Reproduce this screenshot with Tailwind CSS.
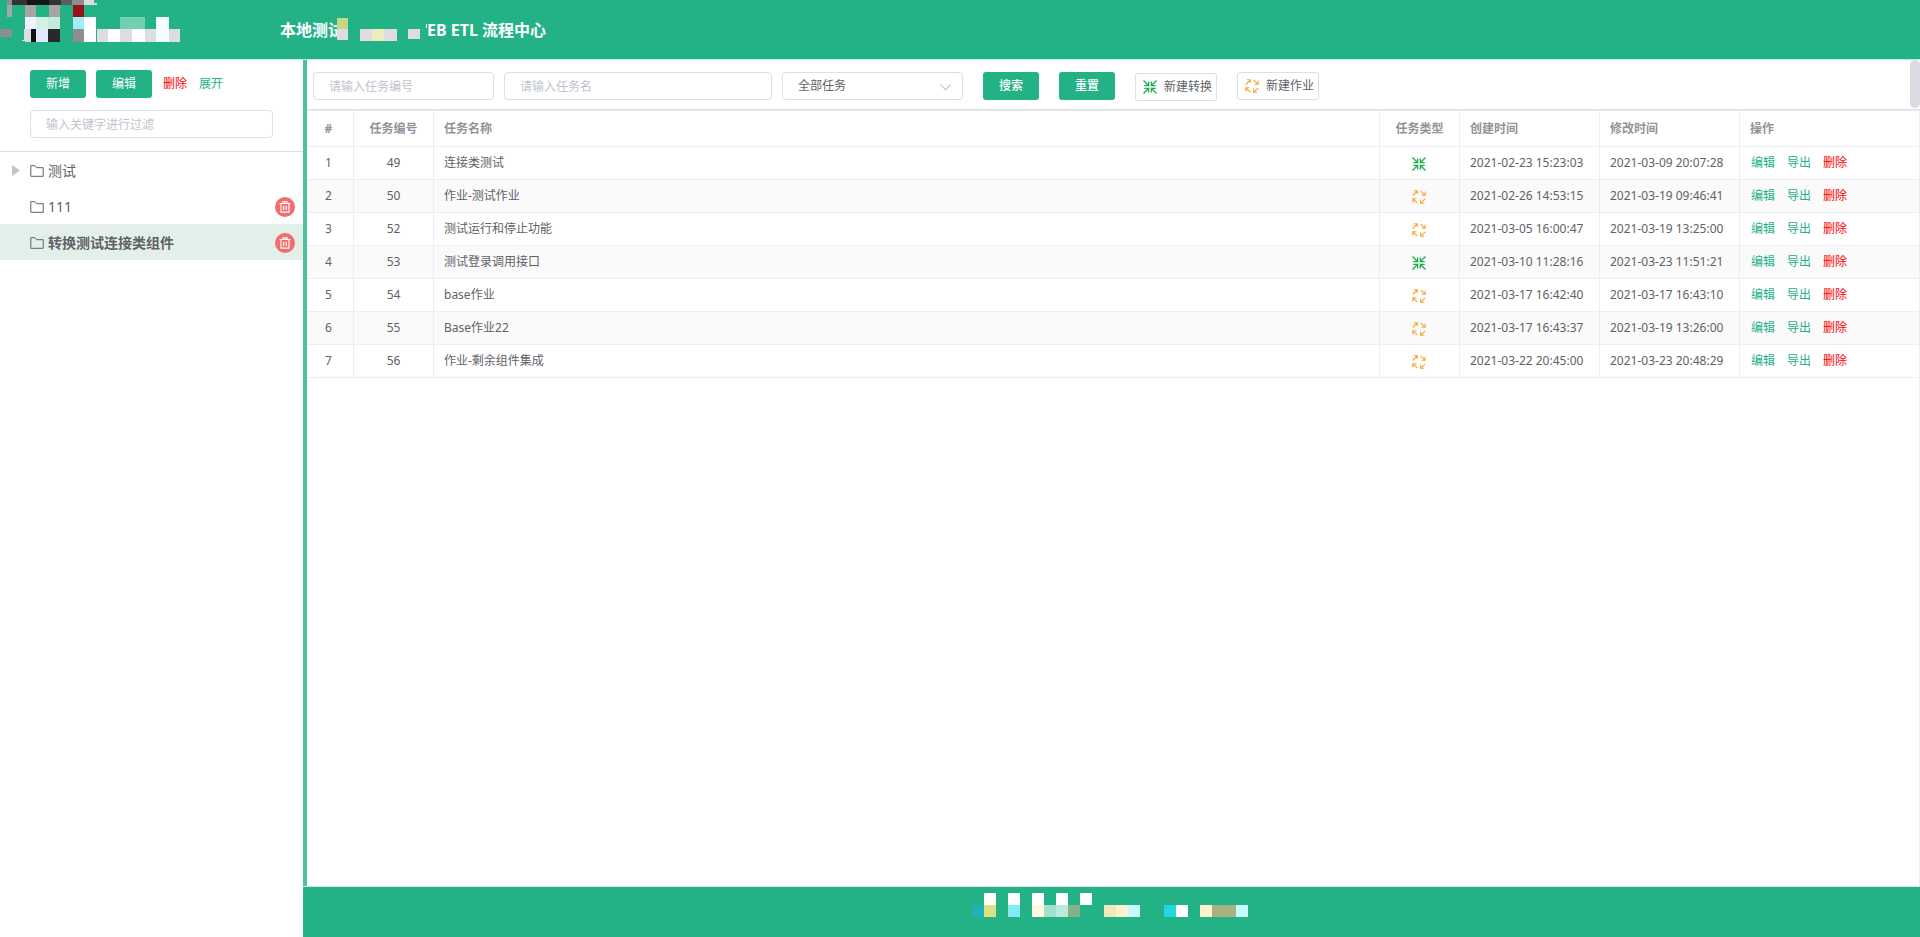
<!DOCTYPE html>
<html lang="zh-CN">
<head>
<meta charset="utf-8">
<meta name="viewport" content="width=device-width, initial-scale=1">
<title>流程中心</title>
<script src="https://cdn.jsdelivr.net/npm/@tailwindcss/browser@4"></script>
</head>
<body class="flex h-screen flex-col overflow-hidden bg-white font-['Noto_Sans','Noto_Sans_CJK_SC',sans-serif] text-xs text-[#606266]">

<svg class="hidden" aria-hidden="true">
  <symbol id="shrink" viewBox="0 0 14 14">
    <path d="M.5.5 5 5M13.500.5 9 5M.5 13.500 5 9M13.500 13.500 9 9" fill="none" stroke="#1fae4e" stroke-width="1.400"/>
    <path d="M6.300 1.500v4.800H1.300V5h2.500L5 3.800V1.500zM7.700 1.500v4.800h5V5h-2.500L9 3.800V1.500zM6.300 12.500V7.700H1.300V9h2.500L5 10.200v2.300zM7.700 12.500V7.700h5V9h-2.500L9 10.200v2.300z" fill="#1fae4e"/>
  </symbol>
  <symbol id="expand" viewBox="0 0 14 14">
    <path d="M.8 5.500 5 1M1.800.8H5.300V4M8.500.8 13 5M13.200 1.500V5.200H9.500M13.200 8.800 9 13M8.600 9.500V13.200H12.200M5.500 13.200 1 9M.8 12.500V8.800H4.500" fill="none" stroke="#f5a93c" stroke-width="1.100"/>
  </symbol>
  <symbol id="folder" viewBox="0 0 14 12">
    <path d="M.8 11.300V.7H5l1.700 2h6.500v8.600z" fill="none" stroke="#606266" stroke-width="1"/>
  </symbol>
  <symbol id="trash" viewBox="0 0 12 12">
    <path d="M.5 2.500h11M4 2.300V.8h4v1.500M2 2.500v8.700h8V2.500M4.700 4.800v4.200M7.300 4.800v4.200" fill="none" stroke="#fff" stroke-width="1.200"/>
  </symbol>
</svg>

<header class="flex h-[60px] shrink-0 items-start border-b border-[#c4e9dd] bg-[#22b286] text-white">
  <svg class="h-[50px] w-[280px] shrink-0" viewBox="0 0 280 50" shape-rendering="crispEdges" aria-hidden="true">
    <path fill="#8e8e90" d="M7 0h8v5H7zM72 0h12v5H72zM0 29h12v8H0zM73 29h12v13H73z"/>
    <path fill="#333" d="M12 0h15v5H12zM49 0h12v5H49z"/><path fill="#161616" d="M27 0h22v5H27z"/><path fill="#5c5e5e" d="M61 0h11v5H61z"/>
    <path fill="#dcdce2" d="M84 0h10v3h3v2H84zM24 29h7v13h-6v-1h-3v-1h2zM97 29h11v13H97zM120 29h12v13h-12zM145 29h11v13h-11zM169 29h11v13h-11z"/>
    <path fill="#a5a5a5" d="M7 5h5v12H7zM25 5h11v12H25zM49 5h11v12H49z"/>
    <path fill="#9b1118" d="M73 5h11v12H73z"/>
    <path fill="#edf2ff" d="M25 17h11v12H25z"/><path fill="#d5f0e5" d="M36 17h12v12H36z"/><path fill="#c2eadd" d="M48 17h12v12H48z"/>
    <path fill="#9eeefc" d="M73 17h11v12H73z"/><path fill="#fff" d="M84 17h12v25H84zM108 29h12v13h-12zM132 29h13v13h-13z"/>
    <path fill="#70d0b2" d="M120 17h25v12h-25z"/><path fill="#f0fffe" d="M156 17h13v25h-13z"/>
    <path fill="#111" d="M31 29h5v13h-5z"/><path fill="#e1e9ff" d="M36 29h12v13H36z"/><path fill="#292929" d="M48 29h12v13H48z"/>
  </svg>
  <h1 class="flex items-center pt-[18px] text-base leading-6 font-bold whitespace-nowrap">
    <span>本地测试</span>
    <svg class="relative -ml-[7px] h-6 w-[90px] shrink-0" viewBox="0 0 90 24" shape-rendering="crispEdges" aria-hidden="true">
      <path fill="#c5d687" d="M0 0h11v11H0z"/><path fill="#dcdce2" d="M0 11h11v11H0zM23 11h12v12H23zM47 11h13v12H47zM71 11h12v10H71z"/><path fill="#f0eabf" d="M35 11h12v12H35z"/><path fill="#fff" d="M89 6h1v4h-1z"/>
    </svg>
    <span>EB ETL 流程中心</span>
  </h1>
</header>

<div class="flex min-h-0 flex-1">
  <aside class="flex w-[303px] shrink-0 flex-col">
    <div class="border-b border-[#dcdfe6] px-[30px] pt-[10px] pb-[13px]">
      <div class="flex items-center">
        <button class="h-7 w-14 rounded-[3px] bg-[#22b286] text-white">新增</button>
        <button class="ml-[10px] h-7 w-14 rounded-[3px] bg-[#22b286] text-white">编辑</button>
        <button class="ml-[11px] text-[#f00]">删除</button>
        <button class="ml-3 text-[#22b286]">展开</button>
      </div>
      <input aria-label="过滤" placeholder="输入关键字进行过滤" class="mt-3 block h-7 w-[243px] rounded border border-[#dcdfe6] px-[15px] placeholder:text-[#c0c4cc]">
    </div>
    <ul class="text-sm">
      <li class="flex h-9 items-center pt-px pr-2 pl-3">
        <svg class="mr-[10px] h-[11px] w-2" viewBox="0 0 8 11" aria-hidden="true"><path d="M0 0 8 5.500 0 11z" fill="#c0c4cc"/></svg>
        <svg class="mr-1 h-3 w-[14px]" aria-hidden="true"><use href="#folder"/></svg><span>测试</span>
      </li>
      <li class="flex h-9 items-center pt-px pr-2 pl-[30px]">
        <svg class="mr-1 h-3 w-[14px]" aria-hidden="true"><use href="#folder"/></svg><span class="flex-1">111</span>
        <button aria-label="删除 111" class="flex size-5 items-center justify-center rounded-full bg-[#f56c6c]"><svg class="size-3"><use href="#trash"/></svg></button>
      </li>
      <li class="flex h-9 items-center bg-[#e3f0e9] pt-px pr-2 pl-[30px]">
        <svg class="mr-1 h-3 w-[14px]" aria-hidden="true"><use href="#folder"/></svg><span class="flex-1 font-bold">转换测试连接类组件</span>
        <button aria-label="删除 转换测试连接类组件" class="flex size-5 items-center justify-center rounded-full bg-[#f56c6c]"><svg class="size-3"><use href="#trash"/></svg></button>
      </li>
    </ul>
  </aside>

  <div class="flex min-w-0 flex-1 flex-col">
    <main class="flex min-h-0 flex-1 flex-col border-l-4 border-[#4dc09e]">
      <div class="flex shrink-0 items-start border-b border-[#dcdfe6] pl-[6px]">
        <form class="flex flex-1 items-start pt-3 pb-2" onsubmit="return false">
          <input aria-label="任务编号" placeholder="请输入任务编号" class="h-7 w-[181px] rounded border border-[#dcdfe6] px-[15px] placeholder:text-[#c0c4cc]">
          <input aria-label="任务名" placeholder="请输入任务名" class="ml-[10px] h-7 w-[268px] rounded border border-[#dcdfe6] px-[15px] placeholder:text-[#c0c4cc]">
          <div class="relative ml-[10px]">
            <select aria-label="任务类型" class="h-7 w-[181px] appearance-none rounded border border-[#dcdfe6] px-[15px]"><option>全部任务</option><option>转换</option><option>作业</option></select>
            <svg class="pointer-events-none absolute top-3 right-3 h-[7px] w-[11px]" viewBox="0 0 11 7" aria-hidden="true"><path d="m.5.7 5 5 5-5" fill="none" stroke="#c0c4cc" stroke-width="1.200"/></svg>
          </div>
          <button class="ml-5 h-7 w-14 rounded-[3px] bg-[#22b286] font-medium text-white">搜索</button>
          <button type="reset" class="ml-5 h-7 w-14 rounded-[3px] bg-[#22b286] font-medium text-white">重置</button>
          <button type="button" class="mt-px ml-5 flex h-7 w-[82px] items-center justify-between rounded-[3px] border border-[#dcdfe6] pr-1 pl-[7px]"><svg class="size-[14px]" aria-hidden="true"><use href="#shrink"/></svg>新建转换</button>
          <button type="button" class="ml-5 flex h-7 w-[82px] items-center justify-between rounded-[3px] border border-[#dcdfe6] pr-1 pl-[7px]"><svg class="size-[14px]" aria-hidden="true"><use href="#expand"/></svg>新建作业</button>
        </form>
        <div class="h-12 w-[10px] rounded-full bg-[#dadbe0]"></div>
      </div>
      <div class="min-h-0 flex-1 border-t border-r border-[#ebeef5]">
        <table class="w-full table-fixed border-separate border-spacing-0 text-left [&_td]:border-r [&_td]:border-b [&_td]:border-[#ebeef5] [&_td:last-child]:border-r-0 [&_th]:border-r [&_th]:border-b [&_th]:border-[#ebeef5] [&_th:last-child]:border-r-0">
          <colgroup><col class="w-[47px]"><col class="w-20"><col><col class="w-20"><col class="w-[140px]"><col class="w-[140px]"><col class="w-[179px]"></colgroup>
          <thead class="text-[#909399]">
            <tr class="h-9"><th class="pr-[3px] text-center">#</th><th class="text-center">任务编号</th><th class="pl-[10px]">任务名称</th><th class="text-center">任务类型</th><th class="pl-[10px]">创建时间</th><th class="pl-[10px]">修改时间</th><th class="pl-[10px]">操作</th></tr>
          </thead>
          <tbody id="jobs"></tbody>
        </table>
      </div>
    </main>
    <footer class="flex h-[51px] shrink-0 justify-center border-t border-[#d5e9e6] bg-[#22b286] pr-[2px]">
      <svg class="h-12 w-[300px]" viewBox="0 0 300 48" shape-rendering="crispEdges" aria-hidden="true">
        <path fill="#fff" d="M23 6h12v12H23zM47 6h12v12H47zM71 6h12v12H71zM95 6h12v12H95zM119 6h12v12h-12zM215 18h12v12h-12z"/>
        <path fill="#20b2b8" d="M11 18h12v12H11z"/><path fill="#dce083" d="M23 18h12v12H23z"/><path fill="#83ebf8" d="M47 18h12v12H47z"/>
        <path fill="#fff8df" d="M71 18h12v12H71z"/><path fill="#a3e1ce" d="M83 18h12v12H83z"/><path fill="#bce9dc" d="M95 18h12v12H95z"/><path fill="#86b184" d="M107 18h12v12h-12z"/>
        <path fill="#f0eabb" d="M143 18h12v12h-12z"/><path fill="#fff1cf" d="M155 18h12v12h-12zM239 18h12v12h-12z"/><path fill="#c7faff" d="M167 18h12v12h-12zM275 18h12v12h-12z"/>
        <path fill="#24d6e3" d="M203 18h12v12h-12z"/><path fill="#a9b183" d="M251 18h24v12h-24z"/>
      </svg>
    </footer>
  </div>
</div>

<script>
const jobs = [
  [49, '连接类测试', 'shrink', '2021-02-23 15:23:03', '2021-03-09 20:07:28'],
  [50, '作业-测试作业', 'expand', '2021-02-26 14:53:15', '2021-03-19 09:46:41'],
  [52, '测试运行和停止功能', 'expand', '2021-03-05 16:00:47', '2021-03-19 13:25:00'],
  [53, '测试登录调用接口', 'shrink', '2021-03-10 11:28:16', '2021-03-23 11:51:21'],
  [54, 'base作业', 'expand', '2021-03-17 16:42:40', '2021-03-17 16:43:10'],
  [55, 'Base作业22', 'expand', '2021-03-17 16:43:37', '2021-03-19 13:26:00'],
  [56, '作业-剩余组件集成', 'expand', '2021-03-22 20:45:00', '2021-03-23 20:48:29'],
];
document.getElementById('jobs').innerHTML = jobs.map(([id, name, icon, created, updated], i) => `
  <tr class="h-[33px] even:bg-[#fafafa]">
    <td class="pr-[3px] text-center">${i + 1}</td><td class="text-center">${id}</td><td class="pl-[10px]">${name}</td>
    <td class="pr-px"><svg class="mx-auto mt-[2px] size-[14px]" role="img" aria-label="${icon === 'shrink' ? '转换' : '作业'}"><use href="#${icon}"/></svg></td>
    <td class="pl-[10px] whitespace-nowrap">${created}</td><td class="pl-[10px] whitespace-nowrap">${updated}</td>
    <td class="pl-[11px]"><div class="flex gap-3"><a href="#" class="text-[#22b286]">编辑</a><a href="#" class="text-[#22b286]">导出</a><a href="#" class="text-[#f00]">删除</a></div></td>
  </tr>`).join('');
</script>
</body>
</html>
